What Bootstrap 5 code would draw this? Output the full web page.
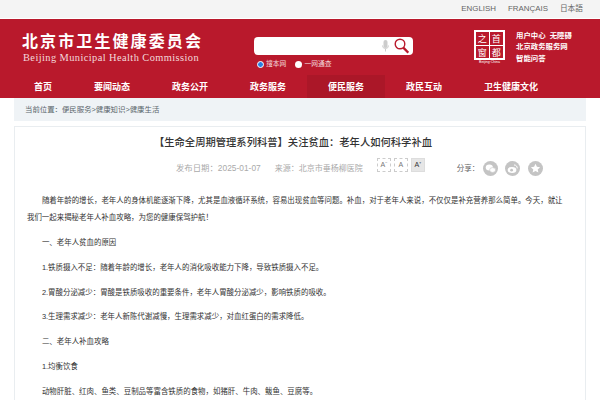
<!DOCTYPE html>
<html lang="zh-CN">
<head>
    <meta charset="UTF-8">
    <meta name="viewport" content="width=device-width, initial-scale=1.0">
    <title>关注贫血：老年人如何科学补血</title>
    <link href="https://cdn.jsdelivr.net/npm/bootstrap@5.3.0/dist/css/bootstrap.min.css" rel="stylesheet">
    <style>
        body {
            font-family: "Liberation Sans", "Noto Sans CJK SC", sans-serif;
            color: #333;
            background: #fff;
            font-size: 7.5px;
        }
        /* 顶部语言栏 */
        .lang-bar {
            height: 18px;
            background: #f4f4f4;
            padding-right: 17px;
            gap: 12px;
            font-size: 7.9px;
            margin-bottom: 1px;
        }
        .lang-bar a { color: #666; text-decoration: none; }
        .lang-bar a:last-child { font-size: 7.7px; }
        .head-red { background: #b9192c; height: 79px; }
        .head-top { height: 56px; padding-left: 22px; }
        .site-name {
            font-size: 16px;
            font-weight: 700;
            letter-spacing: 2.1px;
            line-height: 18px;
            color: #fff;
            margin-top: 14px;
            white-space: nowrap;
        }
        .site-en {
            font-family: "Liberation Serif", serif;
            font-size: 10.4px;
            letter-spacing: .42px;
            line-height: 11px;
            color: #f3d9dc;
            white-space: nowrap;
            padding: 1px 0 0 1px;
        }
        .search-col { width: 159px; margin-left: 51px; margin-top: 18px; }
        .search-box {
            height: 18px;
            background: #fff;
            border-radius: 4px;
            padding-right: 4px;
            gap: 5px;
        }
        .search-opts { gap: 9px; color: #f3d9dc; font-size: 6.8px; line-height: 8px; margin-top: 5px; padding-left: 3px; }
        .radio-dot { width: 7px; height: 7px; border-radius: 50%; background: #fff; display: inline-block; margin-right: 2px; }
        .radio-dot.on { background: #2a7de1; border: 1px solid #fff; }
        .capital-logo { width: 31px; margin-left: 61px; margin-top: 11px; }
        .capital-box {
            width: 31px;
            height: 30px;
            border: 2px solid #fff;
            display: grid;
            grid-template-columns: 1fr 1fr;
            color: #fff;
            font-family: "Noto Sans CJK SC", sans-serif;
            font-size: 9px;
            line-height: 13px;
            text-align: center;
        }
        .capital-box span:nth-child(odd) { border-right: 1px solid #fff; }
        .capital-box span:nth-child(-n+2) { border-bottom: 1px solid #fff; }
        .capital-en { font-size: 3.5px; line-height: 5px; color: #fff; text-align: center; white-space: nowrap; }
        .quick-links { margin-left: 11px; margin-top: 11px; color: #fff; font-size: 7.4px; font-weight: 700; line-height: 11.3px; white-space: nowrap; }
        .main-nav { height: 23px; padding-left: 13px; }
        .main-nav a {
            color: #fff;
            text-decoration: none;
            font-size: 9px;
            font-weight: 700;
            line-height: 24px;
            height: 23px;
            padding: 0 21px;
            white-space: nowrap;
        }
        .main-nav a.on { background: #ab1728; }
        .page-wrap { width: 572px; margin-left: 14px; }
        .crumb {
            height: 23px;
            background: #eff3f6;
            padding-left: 11px;
            font-size: 7.4px;
            color: #5a666c;
            line-height: 23px;
        }
        .article-box {
            margin-top: 5px;
            border: 1px solid #e9edf0;
            border-bottom: 0;
            padding: 0 12px;
            height: 274px;
        }
        .art-title {
            font-size: 10.3px;
            font-weight: 500;
            line-height: 14px;
            text-align: center;
            color: #333;
            margin: 9px 0 0;
            padding-right: 14px;
            white-space: nowrap;
        }
        .art-meta { height: 21px; margin-top: 8px; color: #aaa; font-size: 8.4px; padding-left: 149px; }
        .meta-gap { margin-left: 14px; }
        .meta-source { font-size: 8px; }
        .size-group { margin-bottom: 8px; gap: 3px; }
        .size-btn {
            width: 14px;
            height: 14px;
            border: 1px dashed #ccc;
            color: #777;
            font-size: 7px;
            line-height: 12px;
            text-align: center;
        }
        .size-btn.on { background: #e6e6e6; border: 1px solid #ddd; color: #333; }
        .share-group { margin-left: 32px; gap: 7.5px; color: #666; font-size: 7.5px; }
        .share-group b { font-weight: 400; margin-right: -4px; }
        .share-ico { width: 15px; height: 15px; border-radius: 50%; background: #c4c4c4; display: block; }
        .art-body { margin-top: 13px; padding-right: 8px; color: #333; }
        .art-body p {
            font-size: 7.45px;
            line-height: 17px;
            margin: 0 0 7.85px;
            text-indent: 2em;
        }
        .art-body p:last-child { margin-bottom: 0; }
        .no-wrap { white-space: nowrap; }
    </style>
</head>
<body>
    <div class="lang-bar d-flex justify-content-end align-items-center">
        <a href="#">ENGLISH</a>
        <a href="#">FRANÇAIS</a>
        <a href="#">日本語</a>
    </div>

    <header class="head-red">
        <div class="head-top d-flex">
            <div>
                <div class="site-name">北京市卫生健康委员会</div>
                <div class="site-en">Beijing Municipal Health Commission</div>
            </div>
            <div class="search-col">
                <div class="search-box d-flex justify-content-end align-items-center">
                    <svg width="7" height="12" viewBox="0 0 7 12"><rect x="1.5" y="0" width="4" height="8" rx="2" fill="#ccc"/><path d="M.5 5.5a3 3 0 0 0 6 0M3.5 9v2.5" stroke="#ccc" fill="none"/></svg>
                    <svg width="15" height="16" viewBox="0 0 15 16"><circle cx="6" cy="6" r="4.8" fill="none" stroke="#b9192c" stroke-width="1.4"/><path d="M9.3 9.6l5 5" stroke="#b9192c" stroke-width="2.2"/></svg>
                </div>
                <div class="search-opts d-flex align-items-center">
                    <span class="d-flex align-items-center"><i class="radio-dot on"></i>搜本网</span>
                    <span class="d-flex align-items-center"><i class="radio-dot"></i>一网通查</span>
                </div>
            </div>
            <div class="capital-logo">
                <div class="capital-box">
                    <span>之</span><span>首</span><span>窗</span><span>都</span>
                </div>
                <div class="capital-en">Beijing·China</div>
            </div>
            <div class="quick-links">
                <div>用户中心&nbsp; 无障碍</div>
                <div>北京政务服务网</div>
                <div>智能问答</div>
            </div>
        </div>
        <nav class="main-nav d-flex">
            <a href="#">首页</a>
            <a href="#">要闻动态</a>
            <a href="#">政务公开</a>
            <a href="#">政务服务</a>
            <a href="#" class="on">便民服务</a>
            <a href="#">政民互动</a>
            <a href="#">卫生健康文化</a>
        </nav>
    </header>

    <div class="page-wrap">
        <div class="crumb">当前位置：便民服务&gt;健康知识&gt;健康生活</div>
        <div class="article-box">
            <h1 class="art-title">【生命全周期管理系列科普】关注贫血：老年人如何科学补血</h1>
            <div class="art-meta d-flex align-items-center">
                <span class="no-wrap">发布日期：2025-01-07</span>
                <span class="no-wrap meta-gap meta-source">来源：北京市垂杨柳医院</span>
                <span class="d-flex size-group meta-gap">
                    <span class="size-btn">A⁻</span>
                    <span class="size-btn">A</span>
                    <span class="size-btn on">A⁺</span>
                </span>
                <span class="d-flex align-items-center share-group no-wrap">
                    <b>分享：</b>
                    <svg class="share-ico" viewBox="0 0 15 15"><ellipse cx="6.3" cy="6.5" rx="3.6" ry="2.9" fill="#fff"/><ellipse cx="9.6" cy="9" rx="3" ry="2.4" fill="#fff" stroke="#c4c4c4" stroke-width=".6"/></svg>
                    <svg class="share-ico" viewBox="0 0 15 15"><ellipse cx="7" cy="9" rx="4.4" ry="3" fill="#fff"/><circle cx="6.6" cy="9.2" r="1.4" fill="#c4c4c4"/><path d="M9 4a3 3 0 0 1 3.2 3.4" stroke="#fff" fill="none"/></svg>
                    <svg class="share-ico" viewBox="0 0 15 15"><path d="M7.5 2.8l1.4 3 3.2.4-2.4 2.2.7 3.2-2.9-1.6-2.9 1.6.7-3.2-2.4-2.2 3.2-.4z" fill="#fff"/></svg>
                </span>
            </div>
            <div class="art-body">
                <p>随着年龄的增长，老年人的身体机能逐渐下降，尤其是血液循环系统，容易出现贫血等问题。补血，对于老年人来说，不仅仅是补充营养那么简单。今天，就让我们一起来揭秘老年人补血攻略，为您的健康保驾护航！</p>
                <p>一、老年人贫血的原因</p>
                <p>1.铁质摄入不足：随着年龄的增长，老年人的消化吸收能力下降，导致铁质摄入不足。</p>
                <p>2.胃酸分泌减少：胃酸是铁质吸收的重要条件，老年人胃酸分泌减少，影响铁质的吸收。</p>
                <p>3.生理需求减少：老年人新陈代谢减慢，生理需求减少，对血红蛋白的需求降低。</p>
                <p>二、老年人补血攻略</p>
                <p>1.均衡饮食</p>
                <p>动物肝脏、红肉、鱼类、豆制品等富含铁质的食物，如猪肝、牛肉、鲅鱼、豆腐等。</p>
            </div>
        </div>
    </div>
    <script src="https://cdn.jsdelivr.net/npm/bootstrap@5.3.0/dist/js/bootstrap.bundle.min.js"></script>
</body>
</html>
